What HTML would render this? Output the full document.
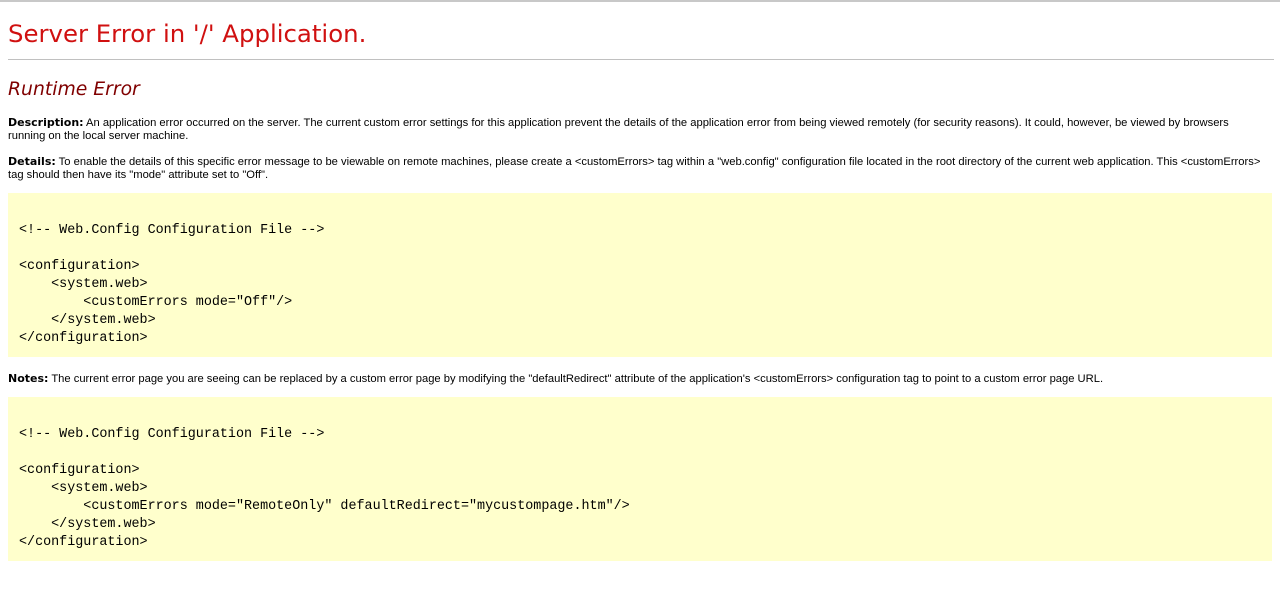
<!DOCTYPE html>
<html><head><style>
html,body{margin:0;padding:0;background:#fff;}
body{width:1280px;height:592px;position:relative;overflow:hidden;font-family:"Liberation Sans",Arial,sans-serif;font-size:11.2px;color:#000;}
.top{position:absolute;left:0;top:0;width:1280px;height:2px;background:#c8c8c8;}
h1{position:absolute;left:8px;top:17px;margin:0;font-family:"DejaVu Sans",Verdana,sans-serif;font-weight:normal;font-size:24.4px;color:#d01010;line-height:34px;white-space:nowrap;}
.hr{position:absolute;left:8px;top:59px;width:1266px;height:1px;background:#c0c0c0;}
h2{position:absolute;left:8px;top:76px;margin:0;font-family:"DejaVu Sans",Verdana,sans-serif;font-weight:normal;font-style:italic;font-size:18.8px;color:#800000;line-height:28px;}
.p{position:absolute;left:8px;width:1266px;line-height:13px;}
.p b{font-family:"DejaVu Sans",Verdana,sans-serif;font-size:11px;}
.box{position:absolute;left:8px;width:1264px;background:#ffffcc;}
pre{margin:0;position:absolute;left:11px;font-family:"Liberation Mono",Consolas,monospace;font-size:13.4px;line-height:18px;color:#000;}
</style></head><body>
<div class="top"></div>
<h1>Server Error in '/' Application.</h1>
<div class="hr"></div>
<h2>Runtime Error</h2>
<div class="p" style="top:116px;width:1240px"><b>Description:</b> An application error occurred on the server. The current custom error settings for this application prevent the details of the application error from being viewed remotely (for security reasons). It could, however, be viewed by browsers running on the local server machine.</div>
<div class="p" style="top:155px"><b>Details:</b> To enable the details of this specific error message to be viewable on remote machines, please create a &lt;customErrors&gt; tag within a "web.config" configuration file located in the root directory of the current web application. This &lt;customErrors&gt; tag should then have its "mode" attribute set to "Off".</div>
<div class="box" style="top:193px;height:164px"><pre style="top:29px">&lt;!-- Web.Config Configuration File --&gt;

&lt;configuration&gt;
    &lt;system.web&gt;
        &lt;customErrors mode="Off"/&gt;
    &lt;/system.web&gt;
&lt;/configuration&gt;</pre></div>
<div class="p" style="top:372px"><b>Notes:</b> The current error page you are seeing can be replaced by a custom error page by modifying the "defaultRedirect" attribute of the application's &lt;customErrors&gt; configuration tag to point to a custom error page URL.</div>
<div class="box" style="top:397px;height:164px"><pre style="top:29px">&lt;!-- Web.Config Configuration File --&gt;

&lt;configuration&gt;
    &lt;system.web&gt;
        &lt;customErrors mode="RemoteOnly" defaultRedirect="mycustompage.htm"/&gt;
    &lt;/system.web&gt;
&lt;/configuration&gt;</pre></div>
</body></html>
